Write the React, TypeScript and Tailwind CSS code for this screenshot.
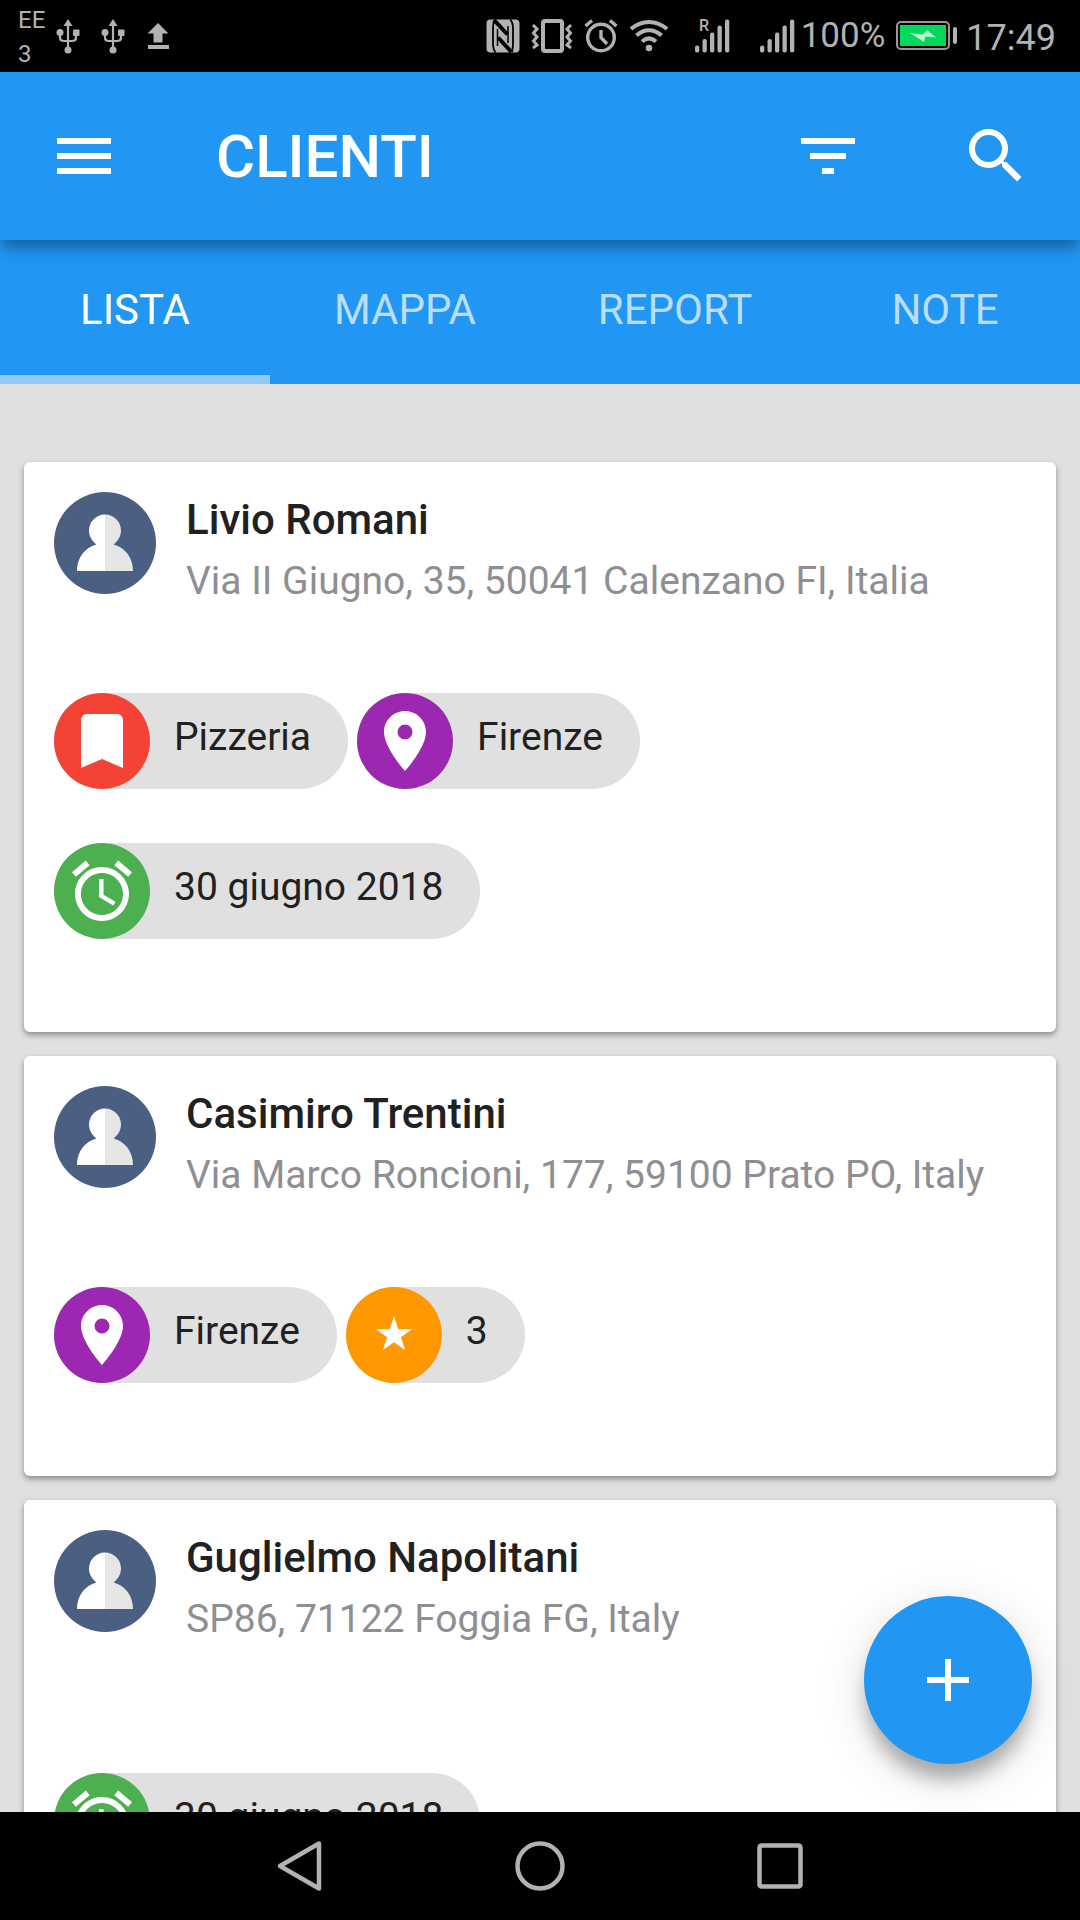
import type { ReactNode } from 'react'
import { MdAdd, MdAlarm, MdBookmark, MdFilterList, MdLocationOn, MdMenu, MdSearch } from 'react-icons/md'

type ChipKind = 'category' | 'city' | 'date' | 'rating'

type Client = {
  name: string
  address: string
  chips: { kind: ChipKind; label: string }[]
  spaced?: boolean
}

const TABS = ['LISTA', 'MAPPA', 'REPORT', 'NOTE']

const CLIENTS: Client[] = [
  {
    name: 'Livio Romani',
    address: 'Via II Giugno, 35, 50041 Calenzano FI, Italia',
    chips: [
      { kind: 'category', label: 'Pizzeria' },
      { kind: 'city', label: 'Firenze' },
      { kind: 'date', label: '30 giugno 2018' },
    ],
  },
  {
    name: 'Casimiro Trentini',
    address: 'Via Marco Roncioni, 177, 59100 Prato PO, Italy',
    chips: [
      { kind: 'city', label: 'Firenze' },
      { kind: 'rating', label: '3' },
    ],
  },
  {
    name: 'Guglielmo Napolitani',
    address: 'SP86, 71122 Foggia FG, Italy',
    chips: [{ kind: 'date', label: '30 giugno 2018' }],
    spaced: true,
  },
]

const CHIP_STYLES: Record<ChipKind, { color: string; icon: ReactNode }> = {
  category: { color: 'bg-[#f44336]', icon: <MdBookmark className="size-18" /> },
  city: { color: 'bg-[#9c27b0]', icon: <MdLocationOn className="size-18" /> },
  date: { color: 'bg-[#4caf50]', icon: <MdAlarm className="size-18" /> },
  rating: { color: 'bg-[#ff9800]', icon: <StarIcon /> },
}

export default function App() {
  return (
    <div className="flex h-screen flex-col overflow-hidden bg-[#e0e0e0] font-['Roboto',sans-serif]">
      <StatusBar />
      <AppBar />
      <Tabs />
      <div className="relative min-h-0 flex-1 overflow-hidden">
        <main className="flex h-full flex-col gap-6 overflow-y-auto px-6 pt-[78px] pb-6 [scrollbar-width:none]">
          {CLIENTS.map((client) => (
            <ClientCard key={client.name} client={client} />
          ))}
        </main>
        <button
          type="button"
          aria-label="Aggiungi cliente"
          className="absolute right-12 bottom-12 flex size-42 items-center justify-center rounded-full bg-[#2196f3] text-white shadow-[0_18px_18px_-3px_rgba(0,0,0,0.27),0_12px_48px_0_rgba(0,0,0,0.15)]"
        >
          <MdAdd className="size-18" />
        </button>
      </div>
      <NavigationBar />
    </div>
  )
}

function AppBar() {
  return (
    <header className="relative z-10 flex h-42 shrink-0 items-center bg-[#2196f3] text-white shadow-[0_9px_12px_-3px_rgba(0,0,0,0.26),0_9px_18px_0_rgba(0,0,0,0.14)]">
      <button type="button" aria-label="Menu" className="flex size-42 items-center justify-center">
        <MdMenu className="size-18" />
      </button>
      <h1 className="ml-12 flex-1 pt-0.5 text-6xl font-medium">CLIENTI</h1>
      <button type="button" aria-label="Filtra" className="flex size-42 items-center justify-center">
        <MdFilterList className="size-18" />
      </button>
      <button type="button" aria-label="Cerca" className="flex size-42 items-center justify-center">
        <MdSearch className="size-18" />
      </button>
    </header>
  )
}

function Tabs() {
  return (
    <div role="tablist" className="grid h-36 shrink-0 grid-cols-4 bg-[#2196f3]">
      {TABS.map((tab, i) => (
        <button
          key={tab}
          type="button"
          role="tab"
          aria-selected={i === 0}
          className={
            i === 0
              ? 'border-b-[9px] border-[#90caf9] pt-1 text-[42px] text-white'
              : 'border-b-[9px] border-transparent pt-1 text-[42px] text-white/70'
          }
        >
          {tab}
        </button>
      ))}
    </div>
  )
}

function ClientCard({ client }: { client: Client }) {
  return (
    <article className="shrink-0 rounded-md bg-white px-[30px] pt-[30px] pb-[93px] shadow-[0_3px_5px_0_rgba(0,0,0,0.28),0_3px_9px_0_rgba(0,0,0,0.12)]">
      <div className="flex gap-[30px]">
        <Avatar />
        <div className="flex min-w-0 flex-col gap-[13px] pt-1">
          <h2 className="text-[42px] leading-[48px] font-medium text-[#212121]">{client.name}</h2>
          <p className="text-[39px] leading-[48px] text-[#8e8e93]">{client.address}</p>
        </div>
      </div>
      <ul
        className={
          client.spaced
            ? 'mt-[130px] flex flex-wrap gap-x-[9px] gap-y-[54px]'
            : 'mt-22 flex flex-wrap gap-x-[9px] gap-y-[54px]'
        }
      >
        {client.chips.map((chip) => (
          <Chip key={chip.label} kind={chip.kind} label={chip.label} />
        ))}
      </ul>
    </article>
  )
}

function Chip({ kind, label }: { kind: ChipKind; label: string }) {
  const { color, icon } = CHIP_STYLES[kind]
  return (
    <li className="flex h-24 items-center gap-6 rounded-full bg-[#e0e0e0] pr-[37px]">
      <span className={`flex size-24 items-center justify-center rounded-full text-white ${color}`}>{icon}</span>
      <span className="pb-2 text-[39px] leading-[48px] text-[#212121]">{label}</span>
    </li>
  )
}

function Avatar() {
  return (
    <svg viewBox="0 0 102 102" className="size-[102px] shrink-0" aria-hidden="true">
      <circle cx="51" cy="51" r="51" fill="#4b5f83" />
      <path d="M51 22.5A16 16 0 0 0 35 38.5C35 44 38 49 42.300 52.500C31 55.500 23 65.500 23 79H51Z" fill="#fff" />
      <path d="M51 22.5A16 16 0 0 1 67 38.5C67 44 64 49 59.700 52.500C71 55.500 79 65.500 79 79H51Z" fill="#e6e6e6" />
    </svg>
  )
}

function StarIcon() {
  return (
    <svg viewBox="0 0 38 38" className="size-[38px]" fill="currentColor" aria-hidden="true">
      <path d="M19 0L23.270 13.130H37.070L25.900 21.240L30.170 34.370L19 26.260L7.830 34.370L12.100 21.240L.93 13.130H14.730Z" />
    </svg>
  )
}

function StatusBar() {
  return (
    <div className="flex h-18 shrink-0 items-center bg-black pr-6 pl-[18px] text-4xl text-[#b2b2b2]">
      <div className="w-[38px] pt-0.5 text-2xl leading-[34px]">
        <div>EE</div>
        <div>3</div>
      </div>
      <div className="flex flex-1 gap-[21px]">
        <UsbIcon />
        <UsbIcon />
        <svg viewBox="0 0 24 36" className="h-9 w-6" fill="currentColor" aria-hidden="true">
          <path d="M12 5L22.500 15.500H16.500V24.500H7.500V15.500H1.500ZM2 27H23V31H2Z" />
        </svg>
      </div>
      <div className="flex items-center gap-[11px]">
        <NfcIcon />
        <VibrateIcon />
        <svg viewBox="0 0 34 34" className="size-[34px]" fill="none" stroke="currentColor" aria-hidden="true">
          <circle cx="17" cy="18.500" r="13.300" strokeWidth="3.400" />
          <path d="M17 11V18.500L23 25" strokeWidth="3.400" />
          <path d="M1.500 7L8 1.500M32.500 7L26 1.500" strokeWidth="3.400" />
        </svg>
        <svg viewBox="0 0 40 34" className="h-[34px] w-10" fill="none" stroke="currentColor" aria-hidden="true">
          <path d="M2 10C12.500 .5 27.500 .5 38 10M7.500 16.500C15 9.500 25 9.500 32.500 16.500M13 22.500C17.500 18.500 22.500 18.500 27 22.500" strokeWidth="4" />
          <circle cx="20" cy="29" r="3.300" fill="currentColor" stroke="none" />
        </svg>
      </div>
      <div className="ml-[25px] flex items-center">
        <SignalIcon roaming />
        <div className="ml-[29px]">
          <SignalIcon />
        </div>
      </div>
      <span className="ml-1.5 text-[35px]">100%</span>
      <svg viewBox="0 0 62 30" className="mr-2 ml-[11px] h-[30px] w-[62px]" aria-hidden="true">
        <rect x="1" y="1" width="52" height="27" rx="4" fill="none" stroke="#999" strokeWidth="2" />
        <rect x="4" y="4" width="46" height="21" fill="#00d95a" />
        <path d="M14 12L27 13.500L31 9L40 16.500L29.500 15.500L28 21Z" fill="#b8f5d0" />
        <rect x="57" y="6" width="4" height="17" rx="2" fill="#b2b2b2" />
      </svg>
      <span className="pt-1">17:49</span>
    </div>
  )
}

function UsbIcon() {
  return (
    <svg viewBox="0 0 24 36" className="h-9 w-6" fill="currentColor" aria-hidden="true">
      <path d="M12 1L16.500 8H7.500Z" />
      <circle cx="12" cy="32" r="3.500" />
      <circle cx="4" cy="14.500" r="3.500" />
      <rect x="17" y="11.500" width="6.500" height="6.500" rx="1" />
      <path
        d="M12 6V31M4 15V19.500Q4 23 8 23H16Q20 23 20 19.500V16"
        fill="none"
        stroke="currentColor"
        strokeWidth="2.200"
      />
    </svg>
  )
}

function NfcIcon() {
  return (
    <svg viewBox="0 0 34 34" className="size-[34px]" fill="none" stroke="#000" aria-hidden="true">
      <rect x="0.500" y="0.500" width="33" height="33" rx="4" fill="currentColor" stroke="none" />
      <path d="M8 1.500Q7 5 7 10V26Q7 30 9.500 33.500M26 33Q27 29 27 24V8Q27 4 24.500 .5" strokeWidth="1.800" />
      <path d="M8 1L21.500 15.500M12 18.500L25.500 33" strokeWidth="4" />
      <path d="M11.500 10V27M22 7V24" strokeWidth="1.500" />
    </svg>
  )
}

function VibrateIcon() {
  return (
    <svg viewBox="0 0 42 34" className="h-[34px] w-[42px]" fill="none" stroke="currentColor" aria-hidden="true">
      <rect x="12" y="2" width="19" height="30" rx="2" strokeWidth="4" />
      <path
        d="M2 6L6 10L2.500 14L6 18L2.500 22L6 26L2 29M40 6L36 10L39.500 14L36 18L39.500 22L36 26L40 29"
        strokeWidth="3"
      />
    </svg>
  )
}

function SignalIcon({ roaming = false }: { roaming?: boolean }) {
  return (
    <svg viewBox="0 0 36 34" className="h-[34px] w-9 overflow-visible" fill="currentColor" aria-hidden="true">
      <rect x="1" y="26.500" width="4.300" height="7" rx="2" />
      <rect x="8.500" y="20" width="4.300" height="13.500" rx="2" />
      <rect x="16" y="13.500" width="4.300" height="20" rx="2" />
      <rect x="23.500" y="6.500" width="4.300" height="27" rx="2" />
      <rect x="31" y="0.500" width="4.300" height="33" rx="2" />
      {roaming && (
        <text x="5" y="12" fontSize="16" fontWeight="500">
          R
        </text>
      )}
    </svg>
  )
}

function NavigationBar() {
  return (
    <nav aria-label="Sistema" className="flex h-27 shrink-0 justify-center bg-black text-[#b2b2b2]">
      <button type="button" aria-label="Indietro" className="flex w-60 items-center justify-center">
        <svg viewBox="0 0 54 54" className="size-13.5" fill="none" stroke="currentColor">
          <path d="M46 4.500V49.500L7 27Z" strokeWidth="4.500" strokeLinejoin="round" />
        </svg>
      </button>
      <button type="button" aria-label="Home" className="flex w-60 items-center justify-center">
        <svg viewBox="0 0 54 54" className="size-13.5" fill="none" stroke="currentColor">
          <circle cx="27" cy="27" r="22.500" strokeWidth="4.500" />
        </svg>
      </button>
      <button type="button" aria-label="Recenti" className="flex w-60 items-center justify-center">
        <svg viewBox="0 0 54 54" className="size-13.5" fill="none" stroke="currentColor">
          <rect x="6.500" y="6.500" width="41" height="41" rx="2" strokeWidth="4.500" />
        </svg>
      </button>
    </nav>
  )
}
